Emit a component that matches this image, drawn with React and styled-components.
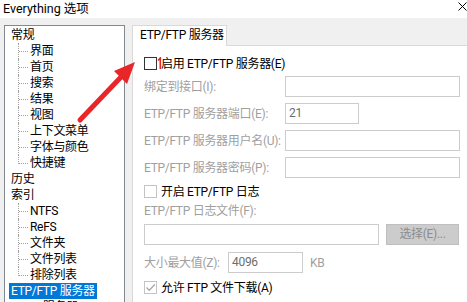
import React from 'react';
import styled, { createGlobalStyle, css } from 'styled-components';

const Global = createGlobalStyle`
  html, body { margin: 0; padding: 0; }
  body {
    width: 467px; height: 302px; overflow: hidden; background: #f0f0f0;
    font-family: Roboto, "Noto Sans CJK SC", sans-serif;
    font-size: 12px; color: #000;
    letter-spacing: -0.3px;
  }
  * { box-sizing: border-box; }
`;

const Window = styled.div`
  position: relative;
  width: 467px;
  height: 302px;
  overflow: hidden;
  display: flex;
  flex-direction: column;
  background: #f0f0f0;
`;

const TitleBar = styled.div`
  height: 18px;
  flex: none;
  background: #fff;
  display: flex;
  align-items: flex-start;
  justify-content: space-between;
  padding-left: 3px;
`;

const Title = styled.span`
  font-size: 12.5px;
  line-height: 17px;
  letter-spacing: 0;
`;

const CloseIcon = styled.svg`
  width: 9px;
  height: 9px;
  margin-top: 2px;
  margin-right: 0;
`;

const Body = styled.div`
  flex: 1;
  display: flex;
  gap: 7px;
  padding: 7px 0 0 4px;
  min-height: 0;
`;

const Tree = styled.div`
  width: 121px;
  height: 320px;
  flex: none;
  background: #fff;
  border: 1px solid #828790;
  padding-top: 1px;
`;

const TreeRow = styled.div`
  position: relative;
  height: 16px;
  display: flex;
  align-items: center;
  padding-left: ${p => (p.$level ? 23 : 4)}px;
  ${p => p.$level && css`
    &::before {
      content: '';
      position: absolute;
      left: 13px;
      top: 0;
      height: ${p.$last ? 9 : 16}px;
      border-left: 1px dotted #a0a0a0;
    }
    &::after {
      content: '';
      position: absolute;
      left: 14px;
      top: 8px;
      width: 9px;
      border-top: 1px dotted #a0a0a0;
    }
  `}
`;

const TreeLabel = styled.span`
  padding: 0 2px;
  height: 16px;
  line-height: 16px;
  white-space: nowrap;
  background: ${p => (p.$selected ? '#0078d7' : 'transparent')};
  color: ${p => (p.$selected ? '#fff' : '#000')};
`;

const TabArea = styled.div`
  flex: 1;
  display: flex;
  flex-direction: column;
  min-width: 0;
`;

const TabStrip = styled.div`
  display: flex;
  flex: none;
`;

const Tab = styled.div`
  position: relative;
  z-index: 1;
  width: 95px;
  height: 21px;
  margin-bottom: -1px;
  padding-left: 7px;
  background: #fff;
  border: 1px solid #d9d9d9;
  border-bottom: none;
  line-height: 19px;
  white-space: nowrap;
`;

const Panel = styled.div`
  flex: 1;
  background: #fff;
  border-top: 1px solid #d9d9d9;
  border-left: 1px solid #d9d9d9;
  padding: 11px 0 0 11px;
  display: flex;
  flex-direction: column;
`;

const CheckRow = styled.div`
  position: relative;
  height: 13px;
  display: flex;
  align-items: center;
  gap: 4px;
  margin-top: ${p => p.$mt || 0}px;
`;

const Box = styled.div`
  width: 13px;
  height: 13px;
  flex: none;
  background: #fff;
  border: 1px solid ${p => (p.$disabled ? '#c4c4c4' : '#333333')};
  display: flex;
  align-items: center;
  justify-content: center;
`;

const CheckLabel = styled.span`
  line-height: 16px;
  white-space: nowrap;
  color: #000;
`;

const Annotation = styled.svg`
  position: absolute;
  left: 13px;
  top: 0;
  width: 5px;
  height: 13px;
`;

const FieldRow = styled.div`
  height: 21px;
  display: flex;
  align-items: center;
  margin-top: ${p => p.$mt || 0}px;
`;

const FieldLabel = styled.span`
  width: ${p => p.$w || 141}px;
  flex: none;
  color: #a0a0a0;
  line-height: 16px;
  white-space: nowrap;
`;

const PlainLabel = styled.div`
  height: 16px;
  line-height: 16px;
  color: #a0a0a0;
  margin-top: ${p => p.$mt || 0}px;
  white-space: nowrap;
`;

const TextBox = styled.div`
  width: ${p => p.$w}px;
  height: 21px;
  flex: none;
  background: #fff;
  border: 1px solid #cccccc;
  color: #6d6d6d;
  padding-left: 3px;
  line-height: 19px;
`;

const Button = styled.div`
  width: 73px;
  height: 21px;
  margin-left: 7px;
  flex: none;
  background: #cccccc;
  border: 1px solid #bfbfbf;
  color: #8d8d8d;
  text-align: center;
  line-height: 19px;
`;

const Unit = styled.span`
  margin-left: 7px;
  color: #a0a0a0;
`;

const ArrowOverlay = styled.svg`
  position: absolute;
  left: 0;
  top: 0;
  width: 467px;
  height: 302px;
  pointer-events: none;
  z-index: 5;
`;

const treeItems = [
  { t: '常规', l: 0 },
  { t: '界面', l: 1 },
  { t: '首页', l: 1 },
  { t: '搜索', l: 1 },
  { t: '结果', l: 1 },
  { t: '视图', l: 1 },
  { t: '上下文菜单', l: 1 },
  { t: '字体与颜色', l: 1 },
  { t: '快捷键', l: 1, last: true },
  { t: '历史', l: 0 },
  { t: '索引', l: 0 },
  { t: 'NTFS', l: 1 },
  { t: 'ReFS', l: 1 },
  { t: '文件夹', l: 1 },
  { t: '文件列表', l: 1 },
  { t: '排除列表', l: 1, last: true },
  { t: 'ETP/FTP 服务器', l: 0, sel: true },
  { t: 'HTTP 服务器', l: 0 },
];

export default function App() {
  return (
    <Window>
      <Global />
      <TitleBar>
        <Title>Everything 选项</Title>
        <CloseIcon viewBox="0 0 9 9">
          <path d="M0.5 0.5 L8.5 8.5 M8.5 0.5 L0.5 8.5" stroke="#000" strokeWidth="1" fill="none" />
        </CloseIcon>
      </TitleBar>
      <Body>
        <Tree>
          {treeItems.map((it, i) => (
            <TreeRow key={i} $level={it.l} $last={it.last}>
              <TreeLabel $selected={it.sel}>{it.t}</TreeLabel>
            </TreeRow>
          ))}
        </Tree>
        <TabArea>
          <TabStrip>
            <Tab>ETP/FTP 服务器</Tab>
          </TabStrip>
          <Panel>
            <CheckRow>
              <Box />
              <CheckLabel>启用 ETP/FTP 服务器(E)</CheckLabel>
              <Annotation viewBox="0 0 5 13">
                <path d="M1 3.5 L3.3 1 L3.3 12" stroke="#e8262a" strokeWidth="1.6" fill="none" />
              </Annotation>
            </CheckRow>
            <FieldRow $mt={6}>
              <FieldLabel>绑定到接口(I):</FieldLabel>
              <TextBox $w={175} />
            </FieldRow>
            <FieldRow $mt={6}>
              <FieldLabel>ETP/FTP 服务器端口(E):</FieldLabel>
              <TextBox $w={74}>21</TextBox>
            </FieldRow>
            <FieldRow $mt={6}>
              <FieldLabel>ETP/FTP 服务器用户名(U):</FieldLabel>
              <TextBox $w={175} />
            </FieldRow>
            <FieldRow $mt={6}>
              <FieldLabel>ETP/FTP 服务器密码(P):</FieldLabel>
              <TextBox $w={175} />
            </FieldRow>
            <CheckRow $mt={7}>
              <Box $disabled />
              <CheckLabel>开启 ETP/FTP 日志</CheckLabel>
            </CheckRow>
            <PlainLabel $mt={5}>ETP/FTP 日志文件(F):</PlainLabel>
            <FieldRow $mt={5}>
              <TextBox $w={235} />
              <Button>选择(E)...</Button>
            </FieldRow>
            <FieldRow $mt={7}>
              <FieldLabel $w={84}>大小最大值(Z):</FieldLabel>
              <TextBox $w={75}>4096</TextBox>
              <Unit>KB</Unit>
            </FieldRow>
            <CheckRow $mt={8}>
              <Box $disabled>
                <svg width="11" height="11" viewBox="0 0 11 11">
                  <path d="M1.5 5.5 L4.3 8.3 L9.8 2.5" stroke="#a8a8a8" strokeWidth="1.3" fill="none" />
                </svg>
              </Box>
              <CheckLabel>允许 FTP 文件下载(A)</CheckLabel>
            </CheckRow>
          </Panel>
        </TabArea>
      </Body>
      <ArrowOverlay viewBox="0 0 467 302">
        <line x1="80" y1="120" x2="122" y2="76" stroke="#e8262a" strokeWidth="5" strokeLinecap="round" />
        <polygon points="135,62 114,71 127,84" fill="#e8262a" />
      </ArrowOverlay>
    </Window>
  );
}
